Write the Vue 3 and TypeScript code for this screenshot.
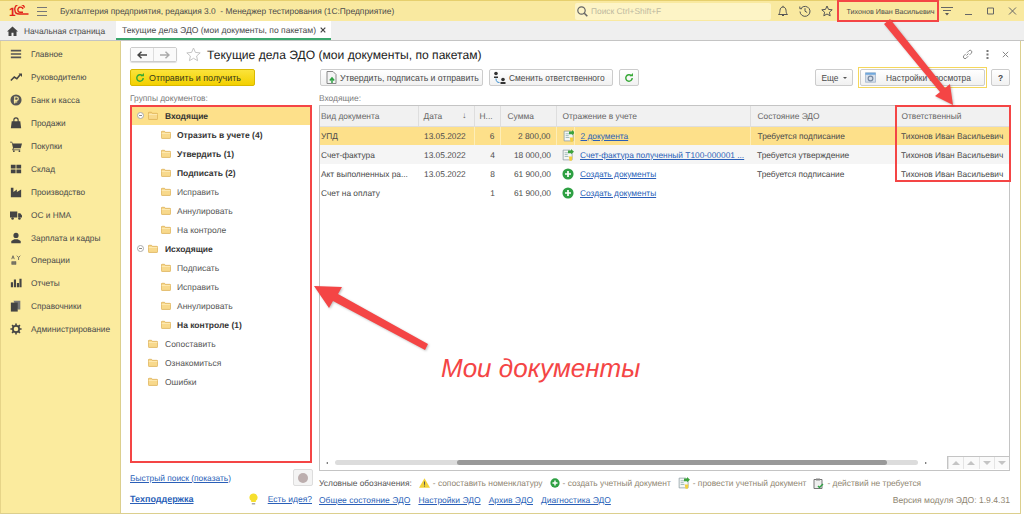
<script setup lang="ts">
interface NavItem { label: string; icon: string }
interface TreeRow { label: string; level: number; bold?: boolean; expander?: boolean; selected?: boolean }
interface DocRow {
  kind: string; date: string; num: string; sum: string
  icon: string; link: string; state: string; owner: string
}

const navItems: NavItem[] = [
  { label: 'Главное', icon: 'menu' },
  { label: 'Руководителю', icon: 'trend' },
  { label: 'Банк и касса', icon: 'coin' },
  { label: 'Продажи', icon: 'bag' },
  { label: 'Покупки', icon: 'cart' },
  { label: 'Склад', icon: 'boxes' },
  { label: 'Производство', icon: 'factory' },
  { label: 'ОС и НМА', icon: 'truck' },
  { label: 'Зарплата и кадры', icon: 'person' },
  { label: 'Операции', icon: 'ops' },
  { label: 'Отчеты', icon: 'bars' },
  { label: 'Справочники', icon: 'books' },
  { label: 'Администрирование', icon: 'gear' }
]

const treeRows: TreeRow[] = [
  { label: 'Входящие', level: 1, bold: true, expander: true, selected: true },
  { label: 'Отразить в учете (4)', level: 2, bold: true },
  { label: 'Утвердить (1)', level: 2, bold: true },
  { label: 'Подписать (2)', level: 2, bold: true },
  { label: 'Исправить', level: 2 },
  { label: 'Аннулировать', level: 2 },
  { label: 'На контроле', level: 2 },
  { label: 'Исходящие', level: 1, bold: true, expander: true },
  { label: 'Подписать', level: 2 },
  { label: 'Исправить', level: 2 },
  { label: 'Аннулировать', level: 2 },
  { label: 'На контроле (1)', level: 2, bold: true },
  { label: 'Сопоставить', level: 1 },
  { label: 'Ознакомиться', level: 1 },
  { label: 'Ошибки', level: 1 }
]

const owner = 'Тихонов Иван Васильевич'
const docs: DocRow[] = [
  { kind: 'УПД', date: '13.05.2022', num: '6', sum: '2 800,00', icon: 'post', link: '2 документа', state: 'Требуется подписание', owner },
  { kind: 'Счет-фактура', date: '13.05.2022', num: '4', sum: '18 000,00', icon: 'post', link: 'Счет-фактура полученный Т100-000001 ...', state: 'Требуется утверждение', owner },
  { kind: 'Акт выполненных ра...', date: '13.05.2022', num: '8', sum: '61 900,00', icon: 'plus', link: 'Создать документы', state: 'Требуется подписание', owner },
  { kind: 'Счет на оплату', date: '', num: '1', sum: '61 900,00', icon: 'plus', link: 'Создать документы', state: '', owner: '' }
]

const footerLinks = ['Общее состояние ЭДО', 'Настройки ЭДО', 'Архив ЭДО', 'Диагностика ЭДО']
</script>

<template>
  <div class="app">
    <svg class="defs" width="0" height="0">
      <symbol id="menu" viewBox="0 0 14 14"><path d="M1 2h12v2H1zM1 6h12v2H1zM1 10h12v2H1z" fill="#555" /></symbol>
      <symbol id="trend" viewBox="0 0 14 14"><path d="M1 11l4-4 3 2 4-5" fill="none" stroke="#444" stroke-width="1.8" /><path d="M10 3h4v4z" fill="#444" /></symbol>
      <symbol id="coin" viewBox="0 0 14 14"><circle cx="7" cy="7" r="6.500" fill="#555" /><path d="M5.500 11V3.500h2.200a2 2 0 010 4H4.500M4.500 9.200h4" fill="none" stroke="#fbeb9e" stroke-width="1.300" /></symbol>
      <symbol id="bag" viewBox="0 0 14 14"><path d="M2 5h10l1 8H1z" fill="#444" /><path d="M4.500 6V3.500a2.500 2.500 0 015 0V6" fill="none" stroke="#444" stroke-width="1.300" /></symbol>
      <symbol id="cart" viewBox="0 0 14 14"><path d="M0 2h2.500L3 4h11l-1.500 5.500H4.500L3.800 11H12v1H2.500l1-3L2 3H0z" fill="#444" /><circle cx="4.500" cy="13" r="1" fill="#444" /><circle cx="11" cy="13" r="1" fill="#444" /></symbol>
      <symbol id="boxes" viewBox="0 0 14 14"><path d="M1 2h5.500v4.500H1zM7.500 2H13v4.500H7.500zM1 7.500h5.500V12H1zM7.500 7.500H13V12H7.500z" fill="#444" /></symbol>
      <symbol id="factory" viewBox="0 0 14 14"><path d="M1 13V2h3v5l4-3v3l5-3v9z" fill="#444" /></symbol>
      <symbol id="truck" viewBox="0 0 14 14"><path d="M0 3h8.500v7H0zM9.500 5H12l2 2.500V10H9.500z" fill="#444" /><circle cx="3" cy="11" r="1.500" fill="#444" /><circle cx="11" cy="11" r="1.500" fill="#444" /></symbol>
      <symbol id="person" viewBox="0 0 14 14"><circle cx="7" cy="4" r="3" fill="#444" /><path d="M1.500 13v-2.500L5 8.500h4l3.500 2V13z" fill="#444" /></symbol>
      <symbol id="ops" viewBox="0 0 14 14"><path d="M2 6l1.500-4L5 6M3 4.500h1M8 2l2 2 2-2M10 4v3M2 9h5v1H2zM2 11h5v1H2z" fill="none" stroke="#555" stroke-width=".9" /></symbol>
      <symbol id="bars" viewBox="0 0 14 14"><path d="M1 6h2.500v6H1zM4.500 3H7v9H4.500zM8 7h2.500v5H8zM11 2h2.500v10H11z" fill="#444" /></symbol>
      <symbol id="books" viewBox="0 0 14 14"><path d="M4 1h8v10H9z" fill="#777" /><path d="M1 3h8v10.500H1z" fill="#444" /></symbol>
      <symbol id="gear" viewBox="0 0 14 14"><circle cx="7" cy="7" r="3.700" fill="none" stroke="#444" stroke-width="2" /><path d="M7 .5v2.500M7 11v2.500M.5 7H3M11 7h2.500M2.400 2.400l1.800 1.800M9.800 9.800l1.800 1.800M2.400 11.600l1.800-1.800M9.800 4.200l1.800-1.800" stroke="#444" stroke-width="1.900" /></symbol>
      <symbol id="folder" viewBox="0 0 14 12"><path d="M.5 2.500a1 1 0 011-1h3.500l1 1.500h6.500a1 1 0 011 1v6.500a1 1 0 01-1 1h-11a1 1 0 01-1-1z" fill="#f8d98c" stroke="#d9a94a" /><path d="M1 4.500h12" stroke="#fff0c4" /></symbol>
      <symbol id="post" viewBox="0 0 16 16"><path d="M1.500 1.500h9l3 3v10h-12z" fill="#f5f7f5" stroke="#8a9aa0" /><path d="M3.500 5h5M3.500 7.500h4M3.500 10h5" stroke="#8aa" /><path d="M8 2h4V0l4 3.500L12 7V5.500H8z" fill="#3da33d" /><path d="M9 10h5l-1 5.500H10z" fill="#f3cf3f" /></symbol>
      <symbol id="plus" viewBox="0 0 14 14"><circle cx="7" cy="7" r="6.500" fill="#2ea043" /><path d="M7 3.500v7M3.500 7h7" stroke="#fff" stroke-width="2" /></symbol>
      <symbol id="refresh" viewBox="0 0 14 14"><path d="M11.500 7a4.500 4.500 0 11-1.300-3.200" fill="none" stroke="#35a835" stroke-width="2" /><path d="M8 4.500h4.500V0z" fill="#35a835" /></symbol>
    </svg>

    <header class="titlebar">
      <svg class="logo" width="20" height="12" viewBox="0 0 20 12">
        <text x="0" y="10.500" class="logo-one">1</text>
        <path d="M15.500 2.600A4.200 4.200 0 006 5.500c0 2.300 1.800 3.500 4.200 3.500h9.300M14 4a2.600 2.600 0 00-5 1.500c0 1 .8 1.700 2 1.700h3" fill="none" stroke="#e2231a" stroke-width="1.400" />
      </svg>
      <svg class="burger" width="10" height="9" viewBox="0 0 10 9"><path d="M0 .5h10M0 4.500h10M0 8.500h10" stroke="#777" /></svg>
      <span class="app-title">Бухгалтерия предприятия, редакция 3.0&nbsp; - Менеджер тестирования (1С:Предприятие)</span>
      <div class="search">
        <svg width="11" height="11" viewBox="0 0 11 11"><circle cx="4.500" cy="4.500" r="3.700" fill="none" stroke="#666" stroke-width="1.200" /><path d="M7.300 7.300l3 3" stroke="#666" stroke-width="1.600" /></svg>
        <span>Поиск Ctrl+Shift+F</span>
      </div>
      <div class="top-icons">
        <svg width="12" height="12" viewBox="0 0 12 12"><path d="M1.500 9.500c1.300-1 1.300-2.500 1.500-4.300C3.200 3.300 4.300 2 6 2s2.800 1.300 3 3.200c.2 1.800.2 3.300 1.500 4.300zM5 10.500h2M6 .8v1.200" fill="none" stroke="#555" /></svg>
        <svg width="12" height="12" viewBox="0 0 12 12"><path d="M2.300 3A5 5 0 111 6.500M.8 1.500v2.200H3M6 3.200v3l2.200 1.300" fill="none" stroke="#555" /></svg>
        <svg width="12" height="12" viewBox="0 0 12 12"><path d="M6 1l1.500 3.400 3.700.4-2.800 2.400.8 3.600L6 9l-3.200 1.800.8-3.600L.8 4.800l3.700-.4z" fill="none" stroke="#555" /></svg>
      </div>
      <span class="user">{{ owner }}</span>
      <div class="win-icons">
        <svg class="win-menu" width="12" height="10" viewBox="0 0 12 10"><path d="M0 1.500h12M2 4.500h8" stroke="#666" /><path d="M4 7h4L6 9.500z" fill="#555" /></svg>
        <svg width="9" height="10" viewBox="0 0 9 10"><path d="M1 8.500h7" stroke="#666" /></svg>
        <svg width="9" height="10" viewBox="0 0 9 10"><path d="M1.500 2h6v6h-6z" fill="none" stroke="#666" /></svg>
        <svg width="9" height="10" viewBox="0 0 9 10"><path d="M1 1.500l7 7M8 1.500l-7 7" stroke="#666" /></svg>
      </div>
    </header>

    <nav class="tabs">
      <div class="tab-home">
        <svg width="11" height="10" viewBox="0 0 11 10"><path d="M5.500 .5L0 5.500h1.500V10h3V6.800h2V10h3V5.500H11z" fill="#444" /></svg>
        <span>Начальная страница</span>
      </div>
      <div class="tab-active">
        <span>Текущие дела ЭДО (мои документы, по пакетам)</span>
        <svg width="6" height="6" viewBox="0 0 6 6"><path d="M.7 .7l4.600 4.600M5.300 .7L.7 5.300" stroke="#444" stroke-width="1.200" /></svg>
      </div>
    </nav>

    <div class="body">
      <aside class="sidebar">
        <div v-for="item in navItems" :key="item.label" class="nav-item">
          <svg width="12" height="12"><use :href="'#' + item.icon" /></svg>
          <span>{{ item.label }}</span>
        </div>
      </aside>

      <main class="main">
        <div class="page-head">
          <div class="nav-buttons">
            <button class="nav-btn"><svg width="10" height="8" viewBox="0 0 10 8"><path d="M10 4H2M4.500 .8L1 4l3.500 3.200" fill="none" stroke="#444" stroke-width="1.500" /></svg></button>
            <button class="nav-btn"><svg width="10" height="8" viewBox="0 0 10 8"><path d="M0 4h8M5.500 .8L9 4 5.500 7.200" fill="none" stroke="#aaa" stroke-width="1.500" /></svg></button>
          </div>
          <svg class="fav" width="15" height="15" viewBox="0 0 15 15"><path d="M7.500 1l1.900 4.400 4.800.5-3.600 3.100 1 4.700-4.100-2.400-4.100 2.400 1-4.700L.8 5.900l4.800-.5z" fill="#fff" stroke="#c4c4c4" /></svg>
          <h1>Текущие дела ЭДО (мои документы, по пакетам)</h1>
          <div class="head-tools">
            <svg width="11" height="11" viewBox="0 0 11 11"><path d="M4.500 6.500l2-2M3.800 4.800L1.800 6.800a1.700 1.700 0 002.400 2.400l2-2M5 3.700l2-2a1.700 1.700 0 012.400 2.400l-2 2" fill="none" stroke="#888" /></svg>
            <svg width="3" height="11" viewBox="0 0 3 11"><path d="M.5 1h2v2h-2zM.5 4.500h2v2h-2zM.5 8h2v2h-2z" fill="#777" /></svg>
            <svg width="7" height="7" viewBox="0 0 7 7"><path d="M.8 .8l5.400 5.400M6.200 .8L.8 6.200" stroke="#888" /></svg>
          </div>
        </div>

        <div class="toolbar">
          <button class="btn btn-primary">
            <svg width="10" height="10"><use href="#refresh" /></svg>
            Отправить и получить
          </button>
          <div class="toolbar-right">
            <button class="btn btn-approve">
              <svg width="13" height="13" viewBox="0 0 13 13"><path d="M2 .5h6l3 3v9H2z" fill="#f4f4f4" stroke="#888" /><path d="M7 12V7.500M4.800 9.500L7 7l2.200 2.500" fill="none" stroke="#2ea043" stroke-width="1.500" /></svg>
              Утвердить, подписать и отправить
            </button>
            <button class="btn btn-owner">
              <svg width="13" height="13" viewBox="0 0 13 13"><circle cx="3" cy="2.500" r="1.800" fill="#333" /><path d="M1 7V5.500h4V7z" fill="#333" /><circle cx="10" cy="8.500" r="1.800" fill="#333" /><path d="M7.500 13v-2h5v2z" fill="#333" /><path d="M3 7.500c0 3 1.300 4 3.500 4" fill="none" stroke="#3b8fd0" /></svg>
              Сменить ответственного
            </button>
            <button class="btn btn-icon"><svg width="10" height="10"><use href="#refresh" /></svg></button>
            <div class="spacer"></div>
            <button class="btn btn-more">Еще <i class="caret"></i></button>
            <div class="focus-ring">
              <button class="btn btn-view">
                <svg width="11" height="11" viewBox="0 0 14 13"><path d="M.5 .5h13v12H.5z" fill="#d6dfea" stroke="#9fb2c8" /><path d="M.5 .5h13v2.500H.5z" fill="#6fa7dc" /><circle cx="7" cy="7.800" r="3" fill="none" stroke="#7788a0" stroke-width="1.500" /></svg>
                <span>Настройки просмотра</span>
              </button>
            </div>
            <button class="btn btn-help">?</button>
          </div>
        </div>

        <div class="columns">
          <section class="left-col">
            <div class="caption">Группы документов:</div>
            <div class="tree">
              <div
                v-for="(row, i) in treeRows"
                :key="i"
                class="tree-row"
                :class="[`level-${row.level}`, { bold: row.bold, selected: row.selected }]"
              >
                <span v-if="row.expander" class="expander"></span>
                <svg width="14" height="12"><use href="#folder" /></svg>
                <span>{{ row.label }}</span>
              </div>
            </div>
            <div class="quick-row">
              <a class="link">Быстрый поиск (показать)</a>
              <button class="stop-btn"><i></i></button>
            </div>
            <div class="support-row">
              <a class="link support">Техподдержка</a>
              <svg width="9" height="12" viewBox="0 0 9 12"><path d="M4.500 .5a4 4 0 00-2.300 7.300V9h4.600V7.800A4 4 0 004.500 .5z" fill="#f6df2e" /><path d="M2.800 10h3.400v1.500H2.800z" fill="#aaa" /></svg>
              <a class="link">Есть идея?</a>
            </div>
          </section>

          <section class="right-col">
            <div class="caption">Входящие:</div>
            <div class="table-box">
              <table class="docs">
                <colgroup>
                  <col style="width: 98px" /><col style="width: 56px" /><col style="width: 26px" />
                  <col style="width: 56px" /><col style="width: 18px" /><col style="width: 176px" />
                  <col style="width: 145px" /><col />
                </colgroup>
                <thead>
                  <tr>
                    <th>Вид документа</th>
                    <th class="date-head">Дата <span class="sort">↓</span></th>
                    <th class="num-head">Н...</th>
                    <th class="sum-head">Сумма</th>
                    <th colspan="2">Отражение в учете</th>
                    <th class="state-head">Состояние ЭДО</th>
                    <th>Ответственный</th>
                  </tr>
                </thead>
                <tbody>
                  <tr v-for="(doc, i) in docs" :key="i" :class="{ current: i === 0, alt: i === 1 }">
                    <td>{{ doc.kind }}</td>
                    <td class="date">{{ doc.date }}</td>
                    <td class="num">{{ doc.num }}</td>
                    <td class="num">{{ doc.sum }}</td>
                    <td class="ico"><svg width="12" height="12"><use :href="'#' + doc.icon" /></svg></td>
                    <td class="ref-cell"><a class="link">{{ doc.link }}</a></td>
                    <td class="state">{{ doc.state }}</td>
                    <td class="owner">{{ doc.owner }}</td>
                  </tr>
                </tbody>
              </table>
              <div class="table-foot">
                <div class="hscroll">
                  <i class="arrow-l"></i>
                  <div class="track"><div class="thumb"></div></div>
                  <i class="arrow-r"></i>
                </div>
                <div class="pager">
                  <span><i class="top"></i></span>
                  <span><i class="up"></i></span>
                  <span><i class="down"></i></span>
                  <span><i class="bottom"></i></span>
                </div>
              </div>
            </div>
            <div class="legend">
              <span class="legend-title">Условные обозначения:</span>
              <svg width="11" height="10" viewBox="0 0 11 10"><path d="M5.500 .3L11 9.800H0z" fill="#f2d33a" /><path d="M5.500 3.500v3.300M5.500 7.600v1" stroke="#555" /></svg>
              <span>- сопоставить номенклатуру</span>
              <svg width="10" height="10"><use href="#plus" /></svg>
              <span>- создать учетный документ</span>
              <svg width="12" height="12"><use href="#post" /></svg>
              <span>- провести учетный документ</span>
              <svg class="clip" width="11" height="11" viewBox="0 0 11 11"><path d="M1 1.500h8v9H1z" fill="#eee" stroke="#777" /><path d="M3 .5h4v2H3z" fill="#888" /><path d="M5 8l1.500 1.500L10 6" fill="none" stroke="#2ea043" stroke-width="1.400" /></svg>
              <span>- действий не требуется</span>
            </div>
            <div class="links-row">
              <a v-for="item in footerLinks" :key="item" class="link">{{ item }}</a>
              <span class="version">Версия модуля ЭДО: 1.9.4.31</span>
            </div>
          </section>
        </div>
      </main>
    </div>

    <!-- пометки поверх скриншота -->
    <div class="mark mark-user"></div>
    <div class="mark mark-owner"></div>
    <div class="mark mark-tree"></div>
    <svg class="arrows" width="1024" height="514" viewBox="0 0 1024 514">
      <path d="M884 24l6-5 55 69 5-4 3 21-18-9 5-4z" fill="#f44545" />
      <path d="M428 344l-3 6-92-49-4 7-15-22 28 1-4 7z" fill="#f44545" />
    </svg>
    <div class="note">Мои документы</div>
  </div>
</template>

<style>
html, body {
  margin: 0;
  background: #fff;
}
</style>

<style scoped>
.app {
  position: relative;
  width: 1024px;
  height: 514px;
  display: flex;
  flex-direction: column;
  overflow: hidden;
  font-family: "Liberation Sans", Arial, sans-serif;
  font-size: 8.4px;
  text-rendering: geometricPrecision;
  color: #4a4a4a;
}
.defs { position: absolute; }
button { font-family: inherit; padding: 0; cursor: default; }
svg { flex: none; }

.titlebar {
  height: 20px;
  flex: none;
  display: flex;
  align-items: center;
  background: #f9e9a0;
  border-top: 1px solid #e6cf6d;
}
.logo { margin-left: 9px; }
.logo-one { font: bold 12px "Liberation Sans", sans-serif; fill: #e2231a; }
.burger { margin-left: 8px; }
.app-title { margin-left: 13px; width: 515px; white-space: nowrap; }
.search {
  width: 196px;
  height: 17px;
  display: flex;
  align-items: center;
  gap: 3px;
  padding-left: 2px;
  box-sizing: border-box;
  background: #fdf4c6;
  border-radius: 2px;
  color: #bdb9a0;
}
.top-icons { display: flex; gap: 10px; margin-left: 6px; width: 61px; }
.user { width: 105px; font-size: 7.2px; text-align: center; white-space: nowrap; }
.win-icons { display: flex; align-items: center; gap: 13px; margin-left: -2px; }
.win-menu { margin-right: -2px; }

.tabs {
  height: 20px;
  flex: none;
  display: flex;
  background: #efefef;
  border-bottom: 1px solid #c4c4c4;
  box-sizing: border-box;
}
.tab-home {
  width: 116px;
  display: flex;
  align-items: center;
  gap: 6px;
  padding-left: 7px;
  box-sizing: border-box;
  white-space: nowrap;
}
.tab-active {
  width: 215px;
  display: flex;
  align-items: center;
  justify-content: space-between;
  padding: 0 5px 0 6px;
  box-sizing: border-box;
  background: #fff;
  border-bottom: 2px solid #3aa76d;
  white-space: nowrap;
  font-size: 8.55px;
}

.body { flex: 1; display: flex; min-height: 0; }
.sidebar {
  width: 121px;
  flex: none;
  box-sizing: border-box;
  padding-top: 2px;
  background: #fbeb9e;
  border-right: 1px solid #dccf8e;
  border-bottom: 1px solid #dccf8e;
  border-left: 1px solid #e6d488;
}
.nav-item {
  height: 22.9px;
  display: flex;
  align-items: center;
  gap: 9px;
  padding-left: 9px;
  white-space: nowrap;
  font-size: 8.3px;
}

.main {
  flex: 1;
  margin-right: 3px;
  padding: 6px 10px 0 9px;
  display: flex;
  flex-direction: column;
  border-right: 1px solid #dccf8e;
  border-bottom: 1px solid #dccf8e;
  min-width: 0;
}
.page-head { height: 15px; display: flex; align-items: center; }
.nav-buttons {
  display: flex;
  width: 47px;
  height: 15px;
  box-sizing: border-box;
  border: 1px solid #ccc;
  border-radius: 2px;
  box-shadow: 0 1px 1px #ddd;
}
.nav-btn {
  flex: 1;
  border: 0;
  background: #fafafa;
  display: flex;
  align-items: center;
  justify-content: center;
}
.nav-btn + .nav-btn { border-left: 1px solid #ddd; }
.fav { margin-left: 9px; }
h1 {
  margin: 0 0 0 6px;
  font-size: 12.1px;
  font-weight: 400;
  color: #222;
  white-space: nowrap;
}
.head-tools { margin-left: auto; display: flex; align-items: center; gap: 13px; padding-right: 1px; }

.toolbar { height: 17px; margin-top: 7px; display: flex; }
.toolbar-right { margin-left: 7px; flex: 1; display: flex; align-items: center; gap: 6px; padding-left: 58px; }
.spacer { flex: 1; }
.btn {
  height: 17px;
  box-sizing: border-box;
  display: flex;
  align-items: center;
  border: 1px solid #ccc;
  border-radius: 2px;
  background: linear-gradient(#fff, #f1f1f1);
  color: #4a4a4a;
  font-size: 8.4px;
  white-space: nowrap;
}
.btn-primary {
  width: 125px;
  gap: 4px;
  padding-left: 4px;
  background: linear-gradient(#fbe33b, #f3d000);
  border-color: #d9b900;
  color: #3a3a1a;
  font-size: 8.95px;
}
.btn-approve { width: 163px; gap: 2px; padding-left: 4px; font-size: 8.7px; }
.btn-owner { width: 124px; gap: 3px; padding-left: 3px; }
.btn-icon { width: 20px; justify-content: center; }
.btn-more { width: 38px; justify-content: center; gap: 4px; }
.caret {
  border-left: 2px solid transparent;
  border-right: 2px solid transparent;
  border-top: 2px solid #555;
}
.focus-ring {
  padding: 1px;
  margin: -2px -2px -2px -1px;
  border: 1px solid #f5d75c;
}
.btn-view { width: 125px; padding-left: 4px; }
.btn-view span { margin-left: 10px; }
.btn-help { width: 19px; justify-content: center; font-weight: 700; }

.columns { margin-top: 7px; flex: 1; display: flex; gap: 7px; min-height: 0; }
.caption { height: 12px; line-height: 11px; color: #7a7a7a; }
.left-col { width: 182px; flex: none; display: flex; flex-direction: column; }
.right-col { flex: 1; min-width: 0; display: flex; flex-direction: column; }

.tree { height: 358px; padding-top: 1px; box-sizing: border-box; }
.tree-row {
  height: 19px;
  display: flex;
  align-items: center;
  gap: 6px;
  color: #555;
  white-space: nowrap;
  font-size: 8.5px;
}
.tree-row.level-1 { padding-left: 18px; gap: 7px; }
.tree-row.level-2 { padding-left: 31px; }
.tree-row.bold { font-weight: 700; color: #333; }
.tree-row.selected { background: #fde08a; }
.tree-row svg { width: 10px; height: 9px; }
.tree-row .expander {
  position: relative;
  width: 5px;
  height: 5px;
  margin-left: -11px;
  margin-right: -3px;
  border: 1px solid #aaa;
  border-radius: 50%;
  background: #fff;
}
.tree-row .expander::after {
  content: "";
  position: absolute;
  left: 1px;
  right: 1px;
  top: 2px;
  height: 1px;
  background: #888;
}

.quick-row { height: 17px; margin-top: 6px; display: flex; align-items: center; justify-content: space-between; }
.stop-btn {
  width: 20px;
  height: 17px;
  margin-right: -1px;
  display: flex;
  align-items: center;
  justify-content: center;
  border: 1px solid #ddd;
  border-radius: 2px;
  background: #f4f4f4;
}
.stop-btn i { width: 10px; height: 10px; border-radius: 50%; background: #bcaeae; }
.support-row { height: 14px; margin-top: 6px; display: flex; align-items: center; font-size: 8.5px; }
.support { font-weight: 700; margin-right: auto; font-size: 9px; }
.support-row svg { margin-right: 10px; }
.link { color: #2a5fb8; text-decoration: underline; white-space: nowrap; }

.table-box {
  height: 366px;
  box-sizing: border-box;
  border: 1px solid #c4c4c4;
  display: flex;
  flex-direction: column;
}
.docs { width: 100%; border-collapse: collapse; table-layout: fixed; }
.docs th {
  height: 20px;
  padding: 0 2px 0 1px;
  background: #f1f1f1;
  border-right: 1px solid #dedede;
  border-bottom: 1px solid #dedede;
  box-sizing: border-box;
  font-weight: 400;
  color: #666;
  text-align: left;
  white-space: nowrap;
  overflow: hidden;
}
.docs th:nth-child(n + 2) { padding-left: 6px; }
.docs th.date-head, .docs th.num-head { padding-left: 5px; }
.docs th.sum-head, .docs th.state-head { padding-left: 7px; }
.docs th:last-child { border-right: 0; }
.date-head { position: relative; }
.sort { position: absolute; right: 7px; top: 4px; }
.docs td {
  height: 19px;
  padding: 0 3px 0 1px;
  box-sizing: border-box;
  white-space: nowrap;
  overflow: hidden;
  font-size: 8.35px;
}
.docs td.date { padding-left: 6px; }
.docs td.num { text-align: right; padding-right: 5px; }
.docs td.ico { padding: 0 0 0 6px; }
.docs td.ico svg { display: block; }
.docs td.ref-cell { padding-left: 6px; }
.docs td.state { padding-left: 7px; }
.docs td.owner { padding-left: 6px; }
.docs tr.current td { background: #fde08a; border-right: 1px solid #fdeeb8; }
.docs tr.current td:nth-child(1),
.docs tr.current td:nth-child(7),
.docs tr.current td:nth-child(8) { border-right: 0; }
.docs tr.alt td { background: #f5f5f5; }

.table-foot { margin-top: auto; height: 13px; display: flex; align-items: center; padding-bottom: 1px; }
.hscroll { flex: 1; display: flex; align-items: center; gap: 7px; padding-left: 6px; }
.arrow-l, .arrow-r { width: 0; height: 0; border-top: 1.500px solid transparent; border-bottom: 1.500px solid transparent; }
.arrow-l { border-right: 2px solid #555; }
.arrow-r { border-left: 2px solid #555; }
.track { flex: 1; height: 5px; background: #dcdcdc; border-radius: 3px; }
.thumb { margin-left: 21%; width: 73.6%; height: 100%; background: #999; border-radius: 3px; }
.pager { display: flex; width: 62px; height: 13px; margin-left: 20px; border-left: 1px solid #c4c4c4; border-top: 1px solid #c4c4c4; box-sizing: border-box; }
.pager span { flex: 1; display: flex; align-items: center; justify-content: center; border-left: 1px solid #e4e4e4; background: #fafafa; }
.pager i { width: 0; height: 0; border-left: 4px solid transparent; border-right: 4px solid transparent; }
.pager i.top, .pager i.up { border-bottom: 4px solid #c4c4c4; }
.pager i.down, .pager i.bottom { border-top: 4px solid #c4c4c4; }

.legend {
  height: 12px;
  margin-top: 6px;
  display: flex;
  align-items: center;
  color: #8f8672;
  white-space: nowrap;
}
.legend-title { color: #555; }
.legend svg { margin-right: 3px; }
.legend span + svg { margin-left: 7px; }
.links-row { height: 14px; margin-top: 4px; display: flex; align-items: center; gap: 8px; font-size: 8.5px; }
.version { margin-left: auto; color: #8f8672; font-size: 8.6px; }

.mark { position: absolute; box-sizing: border-box; border: 2px solid #f44545; }
.mark-user { left: 837px; top: 0; width: 102px; height: 22px; }
.mark-owner { left: 895px; top: 105px; width: 116px; height: 77px; }
.mark-tree { left: 130px; top: 105px; width: 182px; height: 358px; }
.arrows { position: absolute; left: 0; top: 0; pointer-events: none; filter: drop-shadow(1px 1px 1px rgba(0, 0, 0, .25)); }
.note {
  position: absolute;
  left: 441px;
  top: 353px;
  font-size: 26px;
  font-style: italic;
  color: #f44545;
  white-space: nowrap;
}
</style>
